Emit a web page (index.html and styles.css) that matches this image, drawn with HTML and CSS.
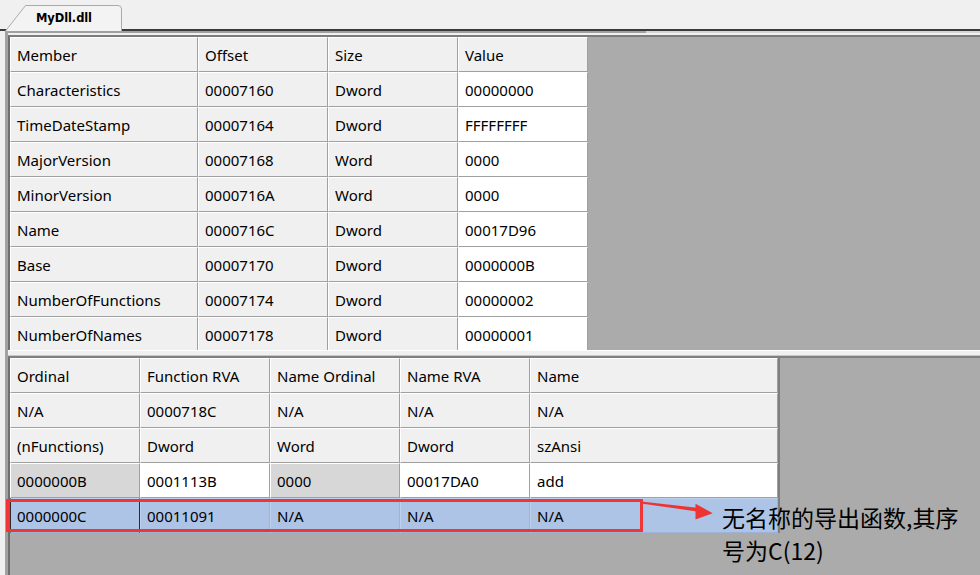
FILE: index.html
```html
<!DOCTYPE html>
<html lang="zh-CN">
<head>
<meta charset="utf-8">
<title>MyDll.dll</title>
<link rel="stylesheet" href="styles.css">
</head>
<body>
<div class="app">
  <div class="tabstrip">
    <div class="tab">
      <svg class="tab-shape" width="117" height="26" viewBox="0 0 117 26"><path d="M0.5 26 L20.5 0.5 H113 Q116.5 0.5 116.5 4 V26" fill="#f3f3f3" stroke="#aaaaaa" stroke-width="1"/></svg>
      <span class="tab-label">MyDll.dll</span>
    </div>
  </div>
  <div class="panel">
    <div class="topedge"></div>
    <div class="pane pane-top">
      <div class="grid grid-top">
        <div class="row"><div class="cell">Member</div><div class="cell">Offset</div><div class="cell">Size</div><div class="cell">Value</div></div>
        <div class="row"><div class="cell">Characteristics</div><div class="cell">00007160</div><div class="cell">Dword</div><div class="cell white">00000000</div></div>
        <div class="row"><div class="cell">TimeDateStamp</div><div class="cell">00007164</div><div class="cell">Dword</div><div class="cell white">FFFFFFFF</div></div>
        <div class="row"><div class="cell">MajorVersion</div><div class="cell">00007168</div><div class="cell">Word</div><div class="cell white">0000</div></div>
        <div class="row"><div class="cell">MinorVersion</div><div class="cell">0000716A</div><div class="cell">Word</div><div class="cell white">0000</div></div>
        <div class="row"><div class="cell">Name</div><div class="cell">0000716C</div><div class="cell">Dword</div><div class="cell white">00017D96</div></div>
        <div class="row"><div class="cell">Base</div><div class="cell">00007170</div><div class="cell">Dword</div><div class="cell white">0000000B</div></div>
        <div class="row"><div class="cell">NumberOfFunctions</div><div class="cell">00007174</div><div class="cell">Dword</div><div class="cell white">00000002</div></div>
        <div class="row"><div class="cell">NumberOfNames</div><div class="cell">00007178</div><div class="cell">Dword</div><div class="cell white">00000001</div></div>
      </div>
    </div>
    <div class="splitter"></div>
    <div class="pane pane-bottom">
      <div class="grid grid-bottom">
        <div class="row"><div class="cell">Ordinal</div><div class="cell">Function RVA</div><div class="cell">Name Ordinal</div><div class="cell">Name RVA</div><div class="cell">Name</div></div>
        <div class="row"><div class="cell">N/A</div><div class="cell">0000718C</div><div class="cell">N/A</div><div class="cell">N/A</div><div class="cell">N/A</div></div>
        <div class="row"><div class="cell">(nFunctions)</div><div class="cell">Dword</div><div class="cell">Word</div><div class="cell">Dword</div><div class="cell">szAnsi</div></div>
        <div class="row"><div class="cell dim">0000000B</div><div class="cell white">0001113B</div><div class="cell dim">0000</div><div class="cell white">00017DA0</div><div class="cell white">add</div></div>
        <div class="row sel"><div class="cell focus">0000000C</div><div class="cell">00011091</div><div class="cell">N/A</div><div class="cell">N/A</div><div class="cell">N/A</div></div>
      </div>
    </div>
  </div>

  <div class="mark-box"></div>
  <svg class="mark-arrow" width="80" height="30" viewBox="0 0 80 30">
    <polygon points="5,6.5 61,12.8 61,16.4 5,8.6" fill="#ee3333"/>
    <polygon points="59.5,8.8 76.7,18.2 59.5,24.4" fill="#ee3333"/>
  </svg>
  <div class="mark-text">无名称的导出函数,其序号为C(12)</div>
</div>
</body>
</html>
```

FILE: styles.css
```css
html, body {
  margin: 0;
  padding: 0;
}

body {
  background: #f0f0f0;
  width: 980px;
  height: 575px;
  overflow: hidden;
}

.app {
  position: relative;
  width: 980px;
  height: 575px;
  display: flex;
  flex-direction: column;
  overflow: hidden;
  background: #f0f0f0;
}

/* ---------- tab strip ---------- */
.tabstrip {
  height: 29px;
  flex: none;
  display: flex;
  align-items: flex-end;
  padding-left: 5px;
  border-bottom: 2px solid #3a3a3a;
}

.tab {
  position: relative;
  width: 117px;
  height: 26px;
  margin-bottom: -2px;
  box-sizing: border-box;
  padding-left: 31px;
  display: flex;
  align-items: center;
}

.tab-shape {
  position: absolute;
  left: 0;
  top: 0;
}

.tab-label {
  position: relative;
  font-family: "DejaVu Sans", sans-serif;
  font-weight: bold;
  font-size: 11.5px;
  color: #000;
  letter-spacing: -0.1px;
}

/* ---------- panel ---------- */
.panel {
  flex: 1;
  display: flex;
  flex-direction: column;
  margin-left: 5px;
  border-left: 3px solid #a2a2a2;
  min-height: 0;
}

.topedge {
  height: 2px;
  flex: none;
  margin-bottom: 2px;
  background: linear-gradient(to right, #a0a0a0 0, #a0a0a0 638px, #d6d6d6 638px, #d6d6d6 100%);
}

.pane {
  background: #ababab;
  border-left: 2px solid #6e6e6e;
  overflow: hidden;
}

.pane-top {
  height: 313px;
  flex: none;
  border-top: 2px solid #7c7c7c;
}

.splitter {
  height: 4px;
  flex: none;
  background: #f0f0f0;
  border-top: 1px solid #ffffff;
  border-bottom: 1px solid #c8c8c8;
}

.pane-bottom {
  flex: 1;
  border-top: 2px solid #808080;
}

/* ---------- grids ---------- */
.grid {
  width: max-content;
}

.grid-bottom {
  border-right: 2px solid #7f7f7f;
}

.row {
  display: grid;
}

.grid-top .row {
  grid-template-columns: 188px 130px 130px 130px;
}

.grid-bottom .row {
  grid-template-columns: 130px 130px 130px 130px 248px;
}

.cell {
  height: 35px;
  box-sizing: border-box;
  display: flex;
  align-items: center;
  padding-left: 6px;
  background: #f0f0f0;
  border-top: 1px solid #ffffff;
  border-left: 1px solid #ffffff;
  border-right: 1px solid #a0a0a0;
  border-bottom: 1px solid #a0a0a0;
  font-family: "Noto Sans", "Noto Sans CJK SC", sans-serif;
  font-size: 15px;
  color: #000000;
  white-space: nowrap;
  overflow: hidden;
}

.cell.white {
  background: #ffffff;
}

.cell.dim {
  background: #d7d7d7;
}

.sel .cell {
  background: #aec4e6;
  border-top-color: #bfd0ec;
  border-left-color: #bfd0ec;
  border-right-color: #9fb4d4;
  border-bottom-color: #9fb4d4;
}

.sel .cell.focus {
  border-left: 1px solid #2a2a2a;
  border-right: 1px solid #2a2a2a;
}

/* ---------- annotation overlay ---------- */
.mark-box {
  position: absolute;
  left: 6px;
  top: 499px;
  width: 637px;
  height: 33px;
  box-sizing: border-box;
  border: 3px solid #ef3535;
}

.mark-arrow {
  position: absolute;
  left: 636px;
  top: 495px;
}

.mark-text {
  position: absolute;
  left: 722px;
  top: 501px;
  width: 248px;
  font-family: "Noto Sans CJK SC", "Noto Sans", sans-serif;
  font-size: 23px;
  line-height: 33px;
  color: #000000;
}
```
